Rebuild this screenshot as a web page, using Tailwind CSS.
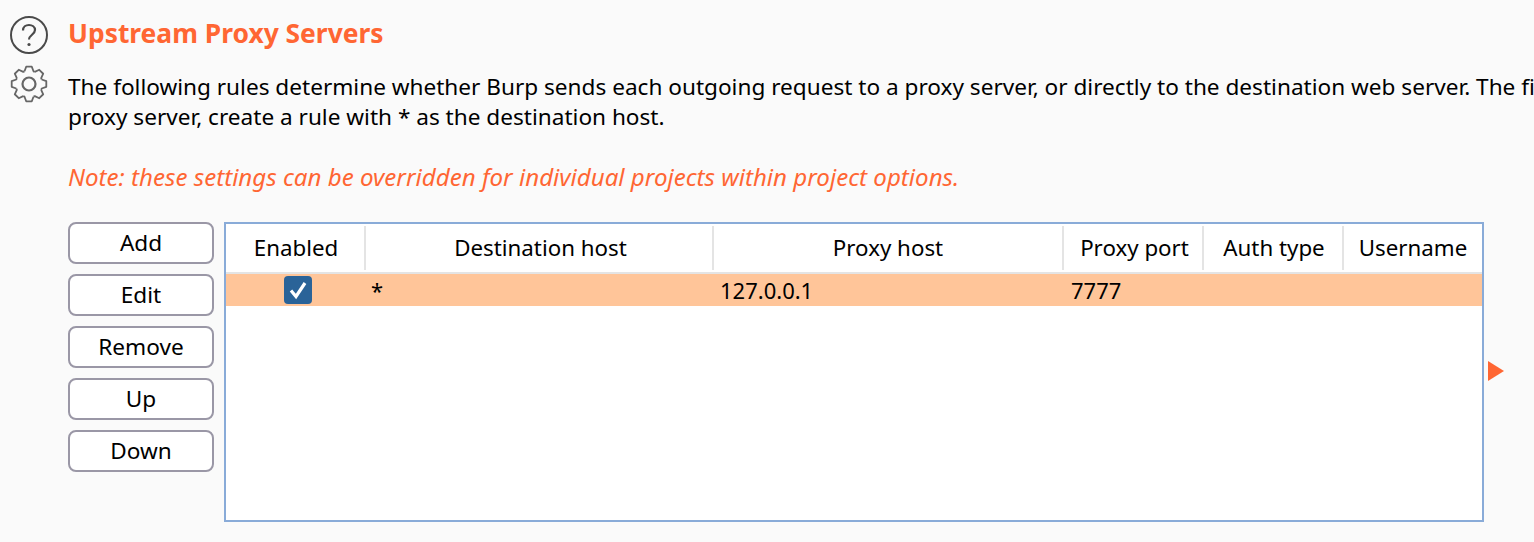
<!DOCTYPE html>
<html lang="en">
<head>
<meta charset="UTF-8">
<title>Upstream Proxy Servers</title>
<script src="https://cdn.jsdelivr.net/npm/@tailwindcss/browser@4"></script>
</head>
<body class="bg-[#fafafa] w-[1534px] h-[542px] overflow-hidden font-['Noto_Sans','Open_Sans',sans-serif] text-[22.6px] text-black">
<div class="flex">
  <!-- side icons -->
  <div class="w-[68px] shrink-0 pl-[10px] pt-[16px] flex flex-col gap-[11px]">
    <svg class="w-[38px] h-[38px]" viewBox="0 0 38 38" fill="none" stroke="#4a4a4a" stroke-width="2">
      <circle cx="19" cy="19" r="18"/>
      <path d="M13 14.500c0-3.500 2.800-5.500 6-5.500s6 2 6 5c0 4.500-6 5-6 9.500" stroke-width="2.200"/>
      <circle cx="19" cy="28.500" r="1.600" fill="#4a4a4a" stroke="none"/>
    </svg>
    <svg class="w-[38px] h-[38px]" viewBox="0 0 38 38" fill="none" stroke="#666" stroke-width="1.800" stroke-linejoin="round">
      <circle cx="19" cy="19" r="6.500" stroke-width="2.200"/>
      <path d="M14.500 6.300L16.200 1.700H21.800L23.500 6.300L24.800 6.840"/>
      <path transform="rotate(45 19 19)" d="M14.500 6.300L16.200 1.700H21.800L23.500 6.300L24.800 6.840"/>
      <path transform="rotate(90 19 19)" d="M14.500 6.300L16.200 1.700H21.800L23.500 6.300L24.800 6.840"/>
      <path transform="rotate(135 19 19)" d="M14.500 6.300L16.200 1.700H21.800L23.500 6.300L24.800 6.840"/>
      <path transform="rotate(180 19 19)" d="M14.500 6.300L16.200 1.700H21.800L23.500 6.300L24.800 6.840"/>
      <path transform="rotate(225 19 19)" d="M14.500 6.300L16.200 1.700H21.800L23.500 6.300L24.800 6.840"/>
      <path transform="rotate(270 19 19)" d="M14.500 6.300L16.200 1.700H21.800L23.500 6.300L24.800 6.840"/>
      <path transform="rotate(315 19 19)" d="M14.500 6.300L16.200 1.700H21.800L23.500 6.300L24.800 6.840"/>
    </svg>
  </div>

  <div class="flex-1 min-w-0 pt-[15px]">
    <h1 class="text-[#ff6633] font-bold text-[26.4px] leading-[36px] whitespace-nowrap">Upstream Proxy Servers</h1>
    <p class="mt-[21px] leading-[30px] whitespace-nowrap">The following rules determine whether Burp sends each outgoing request to a proxy server, or directly to the destination web server. The first rule that matches</p>
    <p class="leading-[30px] whitespace-nowrap">proxy server, create a rule with * as the destination host.</p>
    <p class="mt-[30px] leading-[30px] italic text-[24.1px] text-[#ff6633] whitespace-nowrap">Note: these settings can be overridden for individual projects within project options.</p>

    <div class="flex mt-[30px]">
      <div class="w-[146px] shrink-0 flex flex-col gap-[10px]">
        <button class="h-[42px] bg-white border-2 border-[#9a97a6] rounded-[8px] leading-none">Add</button>
        <button class="h-[42px] bg-white border-2 border-[#9a97a6] rounded-[8px] leading-none">Edit</button>
        <button class="h-[42px] bg-white border-2 border-[#9a97a6] rounded-[8px] leading-none">Remove</button>
        <button class="h-[42px] bg-white border-2 border-[#9a97a6] rounded-[8px] leading-none">Up</button>
        <button class="h-[42px] bg-white border-2 border-[#9a97a6] rounded-[8px] leading-none">Down</button>
      </div>

      <div class="ml-[10px] w-[1260px] h-[300px] shrink-0 bg-white border-2 border-[#89abd8]">
        <div class="flex h-[50px] pt-[2px] pb-[2px] border-b-2 border-[#e4e4e4] text-[22.3px]">
          <div class="w-[140px] pl-[2px] border-r-2 border-[#e4e4e4] flex items-center justify-center">Enabled</div>
          <div class="w-[348px] pl-[3px] border-r-2 border-[#e4e4e4] flex items-center justify-center">Destination host</div>
          <div class="w-[350px] border-r-2 border-[#e4e4e4] flex items-center justify-center">Proxy host</div>
          <div class="w-[140px] pl-[3px] border-r-2 border-[#e4e4e4] flex items-center justify-center">Proxy port</div>
          <div class="w-[140px] pl-[2px] border-r-2 border-[#e4e4e4] flex items-center justify-center">Auth type</div>
          <div class="flex-1 flex items-center justify-center">Username</div>
        </div>
        <div class="flex h-[32px] bg-[#ffc599] items-center text-[22px]">
          <div class="w-[140px] pl-[4px] flex items-center justify-center">
            <span class="w-[28px] h-[28px] rounded-[4px] bg-[#2a6398] flex items-center justify-center">
              <svg class="w-[20px] h-[20px]" viewBox="0 0 20 20" fill="none" stroke="#fff" stroke-width="3.200"><path d="M3 10.500l5 6L17 3"/></svg>
            </span>
          </div>
          <div class="w-[348px] pl-[5px]">*</div>
          <div class="w-[350px] pl-[6px]">127.0.0.1</div>
          <div class="w-[140px] pl-[7px]">7777</div>
        </div>
      </div>

      <!-- expand arrow -->
      <div class="ml-[4px] pt-[139px]">
        <svg class="w-[16px] h-[20px]" viewBox="0 0 16 20"><path d="M0 0L16 10L0 20z" fill="#ff6633"/></svg>
      </div>
    </div>
  </div>
</div>
</body>
</html>
